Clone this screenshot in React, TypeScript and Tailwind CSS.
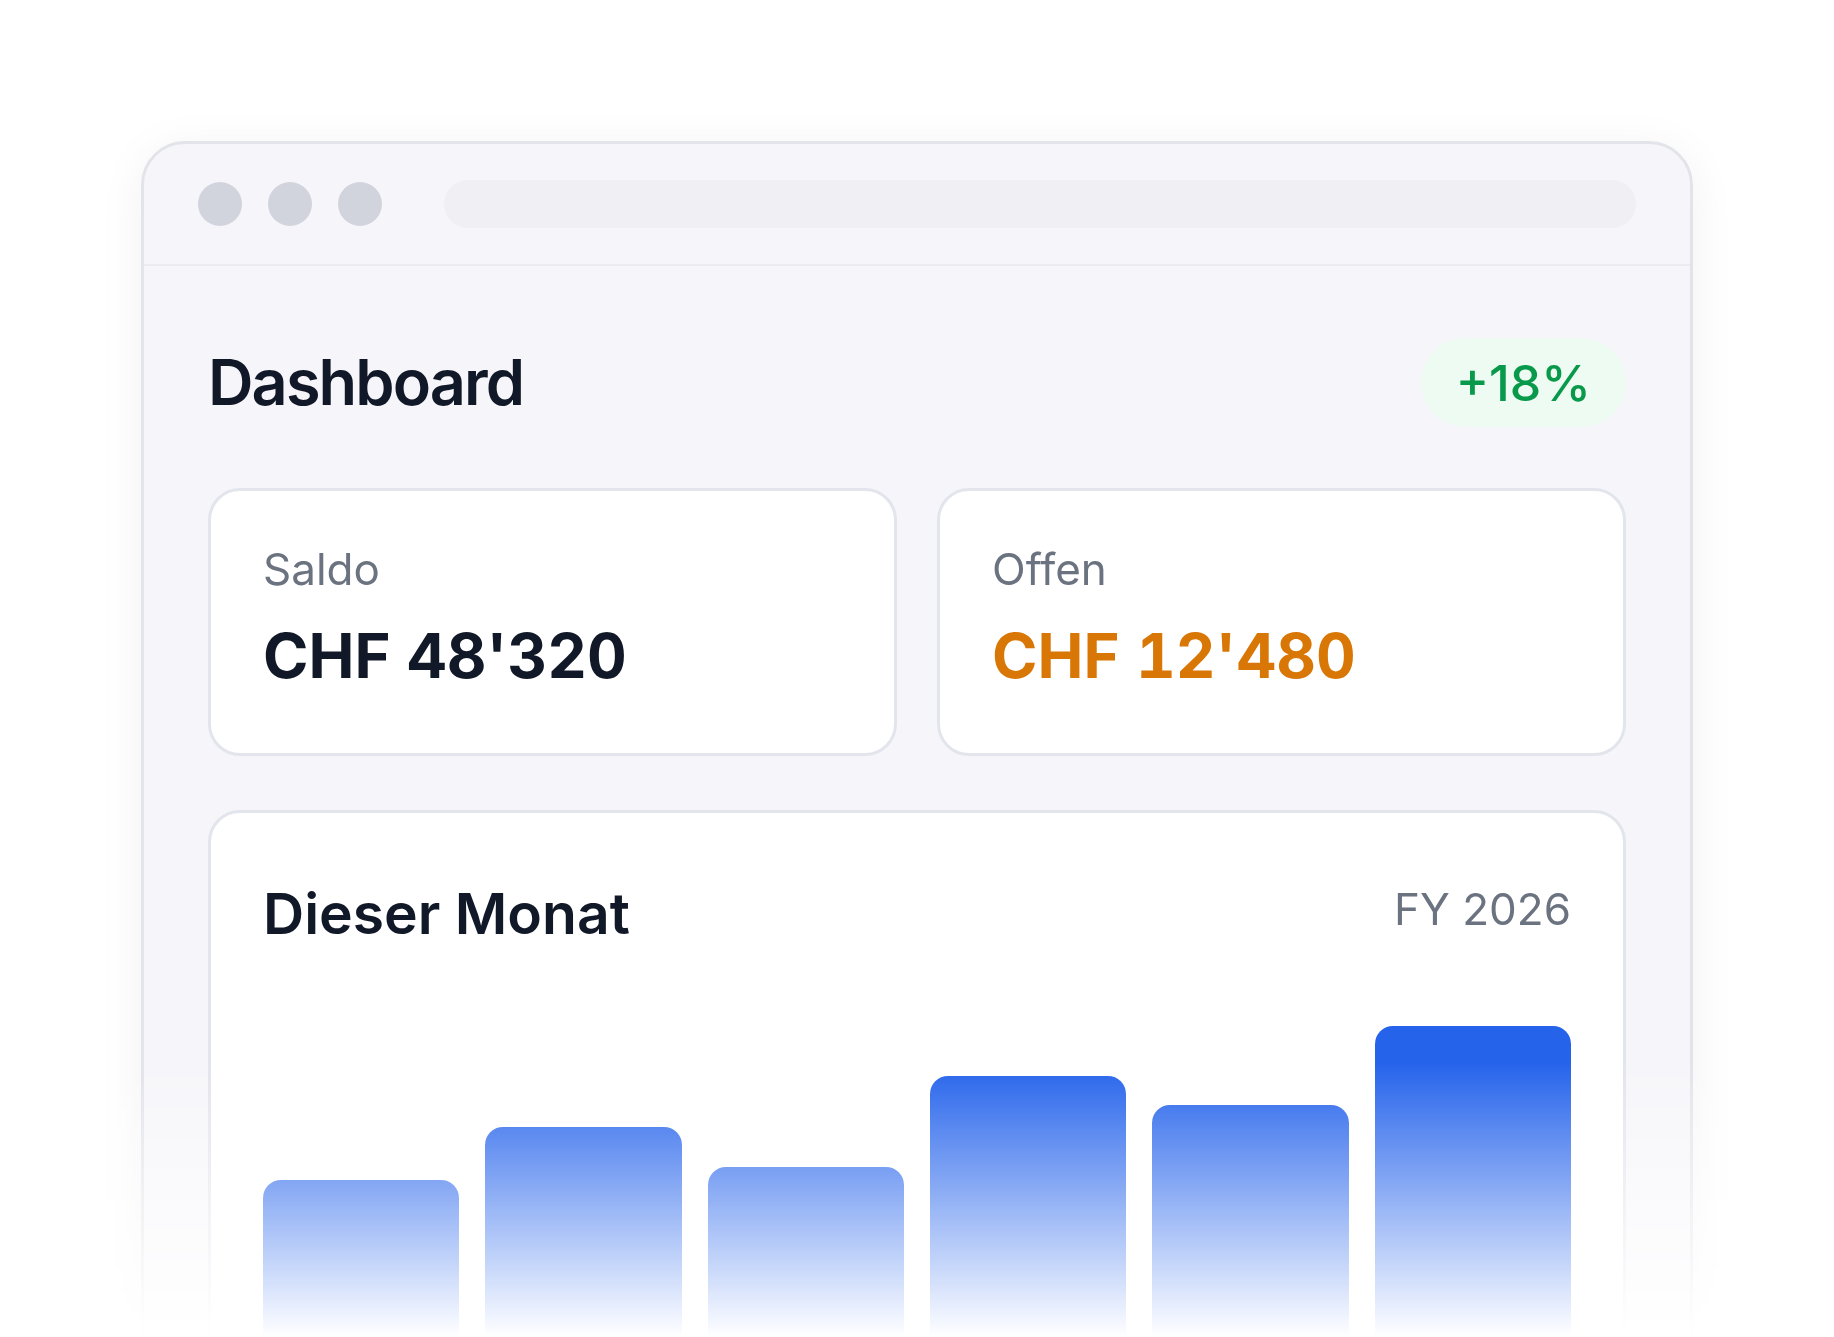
import React from "react";

const bars = [221, 274, 234, 325, 296, 375];

export default function App() {
  return (
    <div className="h-[1337px] w-full overflow-hidden bg-white font-['Inter',sans-serif] [mask-image:linear-gradient(to_bottom,black_1062px,transparent_1337px)] [-webkit-mask-image:linear-gradient(to_bottom,black_1062px,transparent_1337px)]">
      <div className="pt-[141px]">
        <div className="mx-auto w-[1552px] rounded-[44px] border-[3px] border-[#e3e4ea] bg-[#f6f6fa] shadow-[0_8px_48px_rgba(17,24,39,0.06)]">
          {/* window chrome */}
          <div className="flex h-[122px] items-center border-b-2 border-[#ebebf0] px-[54px]">
            <div className="flex gap-[26px]">
              <div className="h-[44px] w-[44px] rounded-full bg-[#d2d4dd]" />
              <div className="h-[44px] w-[44px] rounded-full bg-[#d2d4dd]" />
              <div className="h-[44px] w-[44px] rounded-full bg-[#d2d4dd]" />
            </div>
            <div className="ml-[62px] h-[48px] flex-1 rounded-full bg-[#efeff4]" />
          </div>

          {/* content */}
          <div className="px-16 pt-[72px] pb-16">
            <div className="flex h-[89px] items-center justify-between">
              <h1 className="text-[63px] font-semibold leading-none tracking-[-0.03em] text-[#111827]">Dashboard</h1>
              <div className="flex h-[89px] items-center rounded-full bg-[#eefbf2] px-[35px] text-[50px] font-medium leading-none text-[#08994a]">
                +18%
              </div>
            </div>

            <div className="mt-[61px] grid grid-cols-2 gap-10">
              <div className="rounded-[32px] border-[3px] border-[#e3e5ec] bg-white px-[52px] pt-[51px] pb-[61px]">
                <div className="text-[44px] leading-[54px] text-[#6b7280]">Saldo</div>
                <div className="mt-[24px] text-[61.5px] font-bold leading-[72px] tabular-nums text-[#111827]">CHF 48'320</div>
              </div>
              <div className="rounded-[32px] border-[3px] border-[#e3e5ec] bg-white px-[52px] pt-[51px] pb-[61px]">
                <div className="text-[44px] leading-[54px] text-[#6b7280]">Offen</div>
                <div className="mt-[24px] text-[61.5px] font-bold leading-[72px] tabular-nums text-[#d97706]">CHF 12'480</div>
              </div>
            </div>

            <div className="mt-[54px] rounded-[32px] border-[3px] border-[#e3e5ec] bg-white px-[52px] pt-[72px] pb-16">
              <div className="flex items-start justify-between">
                <h2 className="text-[57px] font-semibold leading-none text-[#111827]">Dieser Monat</h2>
                <div className="mt-[2px] text-[44px] leading-none text-[#6b7280]">FY 2026</div>
              </div>
              <div className="mt-[84px] flex h-[375px] items-end gap-[26px]">
                {bars.map((h, i) => (
                  <div
                    key={i}
                    className="flex-1 rounded-t-[18px] bg-[#2563eb]"
                    style={{ height: `${h}px` }}
                  />
                ))}
              </div>
            </div>
          </div>
        </div>
      </div>
    </div>
  );
}
